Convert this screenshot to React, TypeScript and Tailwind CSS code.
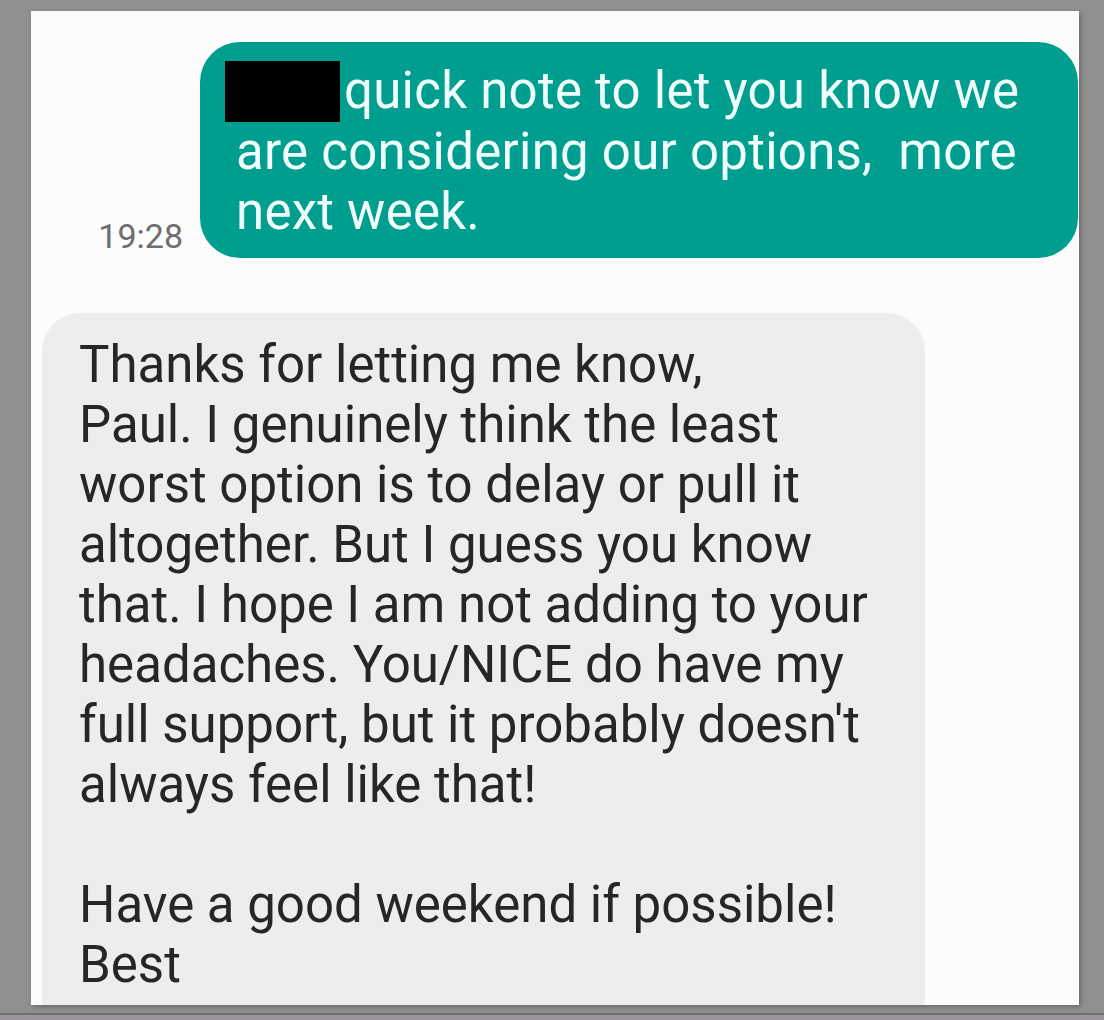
export default function App() {
  return (
    <div className="relative h-[1020px] w-[1104px] overflow-hidden bg-[#8f8f8f] font-['Roboto',sans-serif]">
      <div className="ml-[31px] mt-[11px] h-[994px] w-[1048px] overflow-hidden bg-[#fcfcfc] shadow-[2px_2px_4px_rgba(0,0,0,0.25)]">
        <div className="flex items-end justify-end pr-[1px] pt-[31px]">
          <div className="mb-[5px] mr-[17px] text-[34px] leading-none text-[#6e6e6e]">19:28</div>
          <div className="w-[878px] rounded-[40px] bg-[#009e8e] pb-[16px] pl-[36px] pr-[40px] pt-[19px] text-[51px] leading-[60px] tracking-[0.25px] text-[#f0fffd]">
            <span className="-ml-[11px] mr-[4px] inline-block h-[61px] w-[115px] bg-black align-top"></span>
            quick note to let you know we are considering our options,&nbsp; more next week.
          </div>
        </div>
        <div className="ml-[11px] mt-[55px] w-[883px] rounded-[38px] bg-[#ededed] pl-[37px] pr-[30px] pt-[22px] pb-[40px] text-[51px] leading-[60px] text-[#262626]">
          <p>Thanks for letting me know,</p>
          <p>Paul. I genuinely think the least</p>
          <p>worst option is to delay or pull it</p>
          <p>altogether. But I guess you know</p>
          <p>that. I hope I am not adding to your</p>
          <p>headaches. You/NICE do have my</p>
          <p>full support, but it probably doesn't</p>
          <p>always feel like that!</p>
          <p>&nbsp;</p>
          <p>Have a good weekend if possible!</p>
          <p>Best</p>
        </div>
      </div>
      <div className="mt-[8px] h-[2px] w-full bg-[#6f6f6f]"></div>
      <div className="h-[10px] w-full bg-[#9a959a]"></div>
    </div>
  );
}
